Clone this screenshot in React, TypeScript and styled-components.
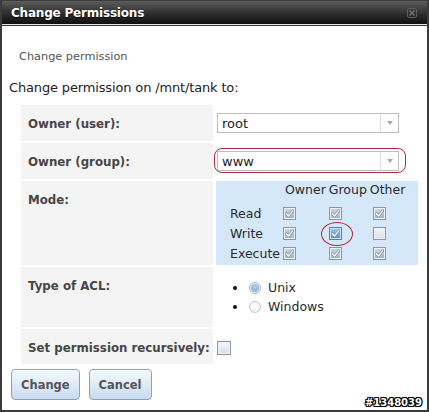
import React from "react";
import styled, { createGlobalStyle, css } from "styled-components";

const GlobalStyle = createGlobalStyle`
  html, body { margin: 0; padding: 0; background: #fff; }
  #root { width: 429px; height: 412px; }
`;

const Window = styled.div`
  position: relative;
  box-sizing: border-box;
  width: 429px;
  height: 412px;
  border: 2px solid #3b3b3b;
  border-top-width: 1px;
  background: #fff;
  font-family: "DejaVu Sans", Verdana, sans-serif;
  display: flex;
  flex-direction: column;
`;

const TitleBar = styled.div`
  height: 23px;
  flex: none;
  display: flex;
  align-items: center;
  justify-content: space-between;
  padding: 0 10px 0 9px;
  background: linear-gradient(to bottom, #5c5c5c 0%, #2e2e2e 55%, #101010 100%);
  border-bottom: 1px solid #e6e6e6;
  box-shadow: 0 1px 0 #3a3a3a;
  margin-bottom: 2px;
`;

const Title = styled.span`
  color: #fff;
  font-weight: bold;
  font-size: 12px;
  letter-spacing: -0.2px;
  text-shadow: 0 1px 1px #000;
`;

const Body = styled.div`
  display: flex;
  flex-direction: column;
  align-items: flex-start;
  padding: 0 0 0 7px;
`;

const Subtitle = styled.div`
  margin: 23px 0 0 10px;
  font-size: 11.3px;
  line-height: 14px;
  color: #555;
`;

const Intro = styled.div`
  margin-top: 16px;
  font-size: 13px;
  letter-spacing: -0.15px;
  line-height: 16px;
  color: #222;
`;

const Form = styled.div`
  margin: 9px 0 0 12px;
  display: grid;
  grid-template-columns: 192px 202px;
  grid-template-rows: 36px 36px 84px 60px 35px;
  column-gap: 3px;
  row-gap: 2px;
`;

const Label = styled.div`
  background: #f4f4f4;
  padding: 12px 0 0 7px;
  font-size: 11.8px;
  font-weight: bold;
  line-height: 15px;
  color: #464646;
`;

const Value = styled.div<{ $tinted?: boolean }>`
  position: relative;
  ${(p) =>
    p.$tinted &&
    css`
      background: #d5e8fa;
    `}
`;

const SelectCell = styled(Value)`
  padding: 8px 0 0 1px;
`;

const SelectBox = styled.div`
  position: relative;
  box-sizing: border-box;
  width: 182px;
  height: 20px;
  border: 1px solid #bdbdbd;
  background: #fff;
  display: flex;
  align-items: center;
`;

const SelectText = styled.span`
  flex: 1;
  padding-left: 4px;
  font-size: 13px;
  color: #222;
`;

const SelectArrow = styled.span`
  width: 17px;
  height: 100%;
  border-left: 1px solid #dcdcdc;
  display: flex;
  align-items: center;
  justify-content: center;
  &::after {
    content: "";
    border-left: 3.5px solid transparent;
    border-right: 3.5px solid transparent;
    border-top: 4px solid #a8a8a8;
  }
`;

const RedRing = styled.div`
  position: absolute;
  top: -4px;
  left: -4px;
  right: -8px;
  bottom: -3px;
  border: 1.3px solid #b3283f;
  border-radius: 8px;
  pointer-events: none;
`;

const ModeGrid = styled.div`
  display: grid;
  grid-template-columns: 53px 38px 52px 40px;
  grid-template-rows: 22px repeat(3, 20px);
  align-items: center;
  padding-left: 14px;
  font-size: 12.5px;
  color: #2a2a2a;
`;

const ColHeads = styled.span`
  grid-column: 2 / 5;
  align-self: start;
  line-height: 18px;
  padding-left: 2px;
  white-space: nowrap;
  word-spacing: -1px;
`;

const CheckSlot = styled.span<{ $offset?: number }>`
  position: relative;
  display: flex;
  padding-left: ${(p) => p.$offset ?? 0}px;
`;

const Box = styled.span<{ $checked?: boolean; $focus?: boolean; $size?: number }>`
  box-sizing: border-box;
  width: ${(p) => p.$size ?? 13}px;
  height: ${(p) => p.$size ?? 13}px;
  border: 1px solid #8797a8;
  box-shadow: inset 0 0 0 1px #eef2f6;
  display: flex;
  align-items: center;
  justify-content: center;
  background: linear-gradient(to bottom, #f4f6f9, #d8dfe7);
  ${(p) =>
    p.$checked &&
    css`
      background: linear-gradient(to bottom, #cfd8e2, #a2b3c6);
    `}
  ${(p) =>
    p.$focus &&
    css`
      border-color: #5a80aa;
      box-shadow: inset 0 0 0 1px #cde0f4;
      background: linear-gradient(to bottom, #a3c5ea, #5b90ca);
    `}
`;

const Ellipse = styled.span`
  position: absolute;
  top: -5px;
  width: 30px;
  height: 22px;
  border: 1.2px solid #b3283f;
  border-radius: 50%;
  pointer-events: none;
`;

const Check = () => (
  <svg width="9" height="9" viewBox="0 0 9 9">
    <path d="M1.2 4.6 L3.5 6.9 L7.8 1.8" fill="none" stroke="#5f7da0" strokeWidth="2.6" strokeLinecap="round" strokeLinejoin="round" />
    <path d="M1.2 4.6 L3.5 6.9 L7.8 1.8" fill="none" stroke="#f6f9fc" strokeWidth="1.5" strokeLinecap="round" strokeLinejoin="round" />
  </svg>
);

const Checkbox = ({ checked, focus, size }: { checked?: boolean; focus?: boolean; size?: number }) => (
  <Box $checked={checked} $focus={focus} $size={size}>
    {checked && <Check />}
  </Box>
);

const RadioList = styled.ul`
  list-style: none;
  margin: 0;
  padding: 11px 0 0 17px;
`;

const RadioItem = styled.li`
  display: flex;
  align-items: center;
  height: 19px;
  font-size: 12.5px;
  color: #2a2a2a;
`;

const Bullet = styled.span`
  width: 4px;
  height: 4px;
  border-radius: 50%;
  background: #111;
  margin-right: 12px;
`;

const Radio = styled.span<{ $on?: boolean }>`
  box-sizing: border-box;
  width: 12px;
  height: 12px;
  border-radius: 50%;
  border: 1px solid #c3cad2;
  background: radial-gradient(circle at 50% 40%, #ffffff, #e8ecf0);
  margin-right: 7px;
  display: flex;
  align-items: center;
  justify-content: center;
  ${(p) =>
    p.$on &&
    css`
      border-color: #a6b4c3;
      &::after {
        content: "";
        width: 6px;
        height: 6px;
        border-radius: 50%;
        background: radial-gradient(circle at 50% 35%, #b9d2ec, #7aa3d2);
        box-shadow: 0 0 0 1px #9bb6d4;
      }
    `}
`;

const CheckCell = styled(Value)`
  padding: 12px 0 0 1px;
`;

const Buttons = styled.div`
  display: flex;
  gap: 9px;
  margin: 5px 0 0 2px;
`;

const Button = styled.button`
  box-sizing: border-box;
  height: 31px;
  padding: 0 9px;
  border: 1px solid #87a3c1;
  border-radius: 4px;
  background: linear-gradient(to bottom, #f4f8fc 0%, #e2edf8 45%, #c8dbef 100%);
  box-shadow: inset 0 1px 0 #fff;
  font-family: "DejaVu Sans", Verdana, sans-serif;
  font-size: 11.5px;
  font-weight: bold;
  color: #555;
`;

const Watermark = styled.span`
  position: absolute;
  right: 5px;
  bottom: 2px;
  font-family: "DejaVu Sans", Verdana, sans-serif;
  font-weight: bold;
  font-size: 10px;
  color: #fff;
  text-shadow: 1px 0 0 #000, -1px 0 0 #000, 0 1px 0 #000, 0 -1px 0 #000, 1px 1px 0 #000, -1px -1px 0 #000,
    1px -1px 0 #000, -1px 1px 0 #000;
`;

const CloseIcon = () => (
  <svg width="10" height="10" viewBox="0 0 10 10">
    <rect x="0.5" y="0.5" width="9" height="9" rx="1.5" fill="none" stroke="#5e5e5e" strokeWidth="1" />
    <path d="M2.5 2.5 L7.5 7.5 M7.5 2.5 L2.5 7.5" stroke="#6e6e6e" strokeWidth="1.6" />
  </svg>
);

const modeRows: { name: string; values: boolean[] }[] = [
  { name: "Read", values: [true, true, true] },
  { name: "Write", values: [true, true, false] },
  { name: "Execute", values: [true, true, true] },
];

const offsets = [0, 8, 0];

export default function App() {
  return (
    <>
      <GlobalStyle />
      <Window>
        <TitleBar>
          <Title>Change Permissions</Title>
          <CloseIcon />
        </TitleBar>
        <Body>
          <Subtitle>Change permission</Subtitle>
          <Intro>Change permission on /mnt/tank to:</Intro>
          <Form>
            <Label>Owner (user):</Label>
            <SelectCell>
              <SelectBox>
                <SelectText>root</SelectText>
                <SelectArrow />
              </SelectBox>
            </SelectCell>

            <Label>Owner (group):</Label>
            <SelectCell>
              <SelectBox>
                <SelectText>www</SelectText>
                <SelectArrow />
                <RedRing />
              </SelectBox>
            </SelectCell>

            <Label>Mode:</Label>
            <Value $tinted>
              <ModeGrid>
                <ColHeads>Owner Group Other</ColHeads>
                {modeRows.map((row) => (
                  <React.Fragment key={row.name}>
                    <span>{row.name}</span>
                    {row.values.map((v, i) => {
                      const focus = row.name === "Write" && i === 1;
                      return (
                        <CheckSlot key={i} $offset={offsets[i]}>
                          <Checkbox checked={v} focus={focus} />
                          {focus && <Ellipse style={{ left: offsets[i] - 8 }} />}
                        </CheckSlot>
                      );
                    })}
                  </React.Fragment>
                ))}
              </ModeGrid>
            </Value>

            <Label>Type of ACL:</Label>
            <Value>
              <RadioList>
                <RadioItem>
                  <Bullet />
                  <Radio $on />
                  Unix
                </RadioItem>
                <RadioItem>
                  <Bullet />
                  <Radio />
                  Windows
                </RadioItem>
              </RadioList>
            </Value>

            <Label>Set permission recursively:</Label>
            <CheckCell>
              <Checkbox size={14} />
            </CheckCell>
          </Form>
          <Buttons>
            <Button>Change</Button>
            <Button>Cancel</Button>
          </Buttons>
        </Body>
        <Watermark>#1348039</Watermark>
      </Window>
    </>
  );
}
